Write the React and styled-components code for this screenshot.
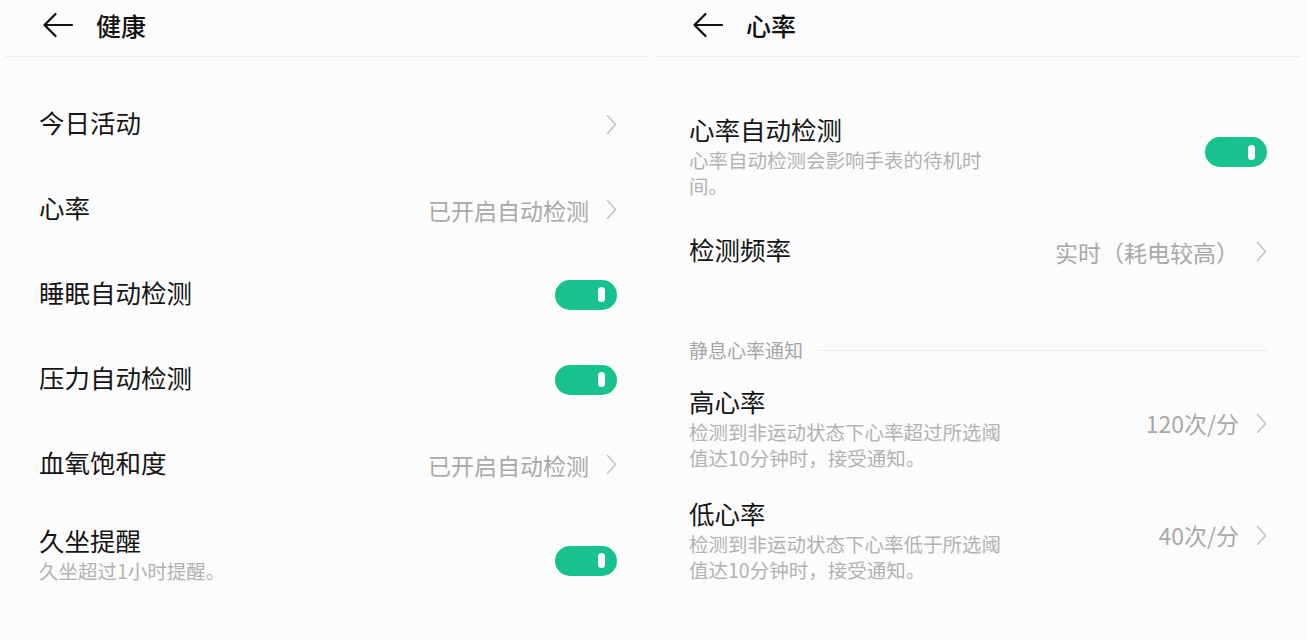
import React from 'react';
import styled, { createGlobalStyle } from 'styled-components';

const GlobalStyle = createGlobalStyle`
  html, body {
    margin: 0;
    padding: 0;
    background: #fcfcfc;
  }
  body {
    font-family: "Noto Sans CJK SC", "Noto Sans", sans-serif;
    color: #111;
    overflow: hidden;
  }
`;

const Screen = styled.div`
  display: flex;
  width: 1307px;
  height: 640px;
  overflow: hidden;
  background: #fcfcfc;
`;

const Panel = styled.div`
  width: ${(p) => p.width}px;
  flex-shrink: 0;
  display: flex;
  flex-direction: column;
`;

const Header = styled.div`
  height: 57px;
  box-sizing: border-box;
  padding-bottom: 6px;
  display: flex;
  align-items: center;
  margin: 0 ${(p) => p.lineRight}px 0 ${(p) => p.lineLeft}px;
  padding-left: ${(p) => 42 - p.lineLeft}px;
  border-bottom: 1px solid #ececec;
  gap: 23px;
`;

const Title = styled.h1`
  margin: 0;
  font-size: 25px;
  font-weight: 500;
  line-height: 1;
`;

const List = styled.div`
  display: flex;
  flex-direction: column;
  padding: ${(p) => p.top}px ${(p) => p.right}px 0 39px;
`;

const Row = styled.div`
  display: flex;
  align-items: center;
  justify-content: space-between;
  min-height: ${(p) => (p.tall ? 0 : 85)}px;
  padding: ${(p) => p.pad || '0'};
`;

const TextBlock = styled.div`
  display: flex;
  flex-direction: column;
`;

const Label = styled.div`
  font-size: 25.5px;
  line-height: ${(p) => (p.withSub ? 36 : 30)}px;
  padding-bottom: ${(p) => (p.withSub ? 0 : 6)}px;
  color: #151515;
`;

const Sub = styled.div`
  font-size: 19.5px;
  line-height: 26px;
  color: #b2b2b2;
  max-width: ${(p) => p.max || 400}px;
`;

const Value = styled.div`
  display: flex;
  align-items: center;
  gap: 17px;
  font-size: 23px;
  color: #a9a9a9;
  margin-top: ${(p) => p.shift || 0}px;
`;

const Toggle = styled.div`
  position: relative;
  width: 62px;
  height: 30px;
  border-radius: 15px;
  background: #17c28e;
  flex-shrink: 0;
  margin-top: ${(p) => p.shift || 0}px;

  &::after {
    content: '';
    position: absolute;
    left: 43px;
    top: 7.5px;
    width: 7px;
    height: 15px;
    border-radius: 4px;
    background: #fff;
  }
`;

const Section = styled.div`
  display: flex;
  align-items: center;
  gap: 14px;
  margin: 43px 0 8px;
  font-size: 19px;
  line-height: 26px;
  color: #a6a6a6;

  &::after {
    content: '';
    flex: 1;
    height: 1px;
    background: #ececec;
  }
`;

const BackArrow = () => (
  <svg width="31" height="26" viewBox="0 0 31 26" fill="none">
    <path d="M30 13H2.5M13.5 2L2.5 13l11 11" stroke="#111" strokeWidth="2.2" strokeLinecap="round" strokeLinejoin="round" />
  </svg>
);

const Chevron = () => (
  <svg width="11" height="21" viewBox="0 0 11 21" fill="none">
    <path d="M1.5 1.5l8 9-8 9" stroke="#c2c2c2" strokeWidth="1.5" strokeLinecap="round" strokeLinejoin="round" />
  </svg>
);

export default function App() {
  return (
    <Screen>
      <GlobalStyle />
      <Panel width={650}>
        <Header lineLeft={5} lineRight={2}>
          <BackArrow />
          <Title>健康</Title>
        </Header>
        <List top={25} right={33}>
          <Row>
            <Label>今日活动</Label>
            <Value><Chevron /></Value>
          </Row>
          <Row>
            <Label>心率</Label>
            <Value>已开启自动检测<Chevron /></Value>
          </Row>
          <Row>
            <Label>睡眠自动检测</Label>
            <Toggle />
          </Row>
          <Row>
            <Label>压力自动检测</Label>
            <Toggle />
          </Row>
          <Row>
            <Label>血氧饱和度</Label>
            <Value>已开启自动检测<Chevron /></Value>
          </Row>
          <Row tall pad="15px 0">
            <TextBlock>
              <Label withSub>久坐提醒</Label>
              <Sub>久坐超过1小时提醒。</Sub>
            </TextBlock>
            <Toggle shift={15} />
          </Row>
        </List>
      </Panel>
      <Panel width={657}>
        <Header lineLeft={5} lineRight={7}>
          <BackArrow />
          <Title>心率</Title>
        </Header>
        <List top={42} right={40}>
          <Row tall pad="12px 0 10px">
            <TextBlock>
              <Label withSub>心率自动检测</Label>
              <Sub max={300}>心率自动检测会影响手表的待机时间。</Sub>
            </TextBlock>
            <Toggle shift={-6} />
          </Row>
          <Row>
            <Label>检测频率</Label>
            <Value>实时（耗电较高）<Chevron /></Value>
          </Row>
          <Section>静息心率通知</Section>
          <Row tall pad="12px 0">
            <TextBlock>
              <Label withSub>高心率</Label>
              <Sub max={320}>检测到非运动状态下心率超过所选阈值达10分钟时，接受通知。</Sub>
            </TextBlock>
            <Value shift={-8}>120次/分<Chevron /></Value>
          </Row>
          <Row tall pad="12px 0">
            <TextBlock>
              <Label withSub>低心率</Label>
              <Sub max={320}>检测到非运动状态下心率低于所选阈值达10分钟时，接受通知。</Sub>
            </TextBlock>
            <Value shift={-8}>40次/分<Chevron /></Value>
          </Row>
        </List>
      </Panel>
    </Screen>
  );
}
